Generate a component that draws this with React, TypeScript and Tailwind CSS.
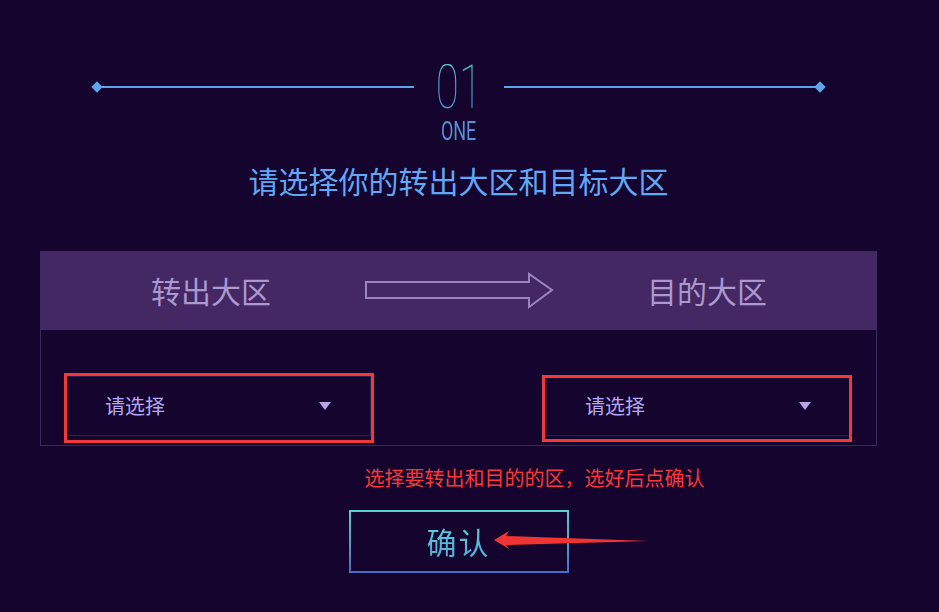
import React from 'react';

const cjk = { fontFamily: '"Microsoft YaHei", "Noto Sans CJK SC", "Noto Sans", sans-serif' };

function Divider() {
    return (
        <div className="flex h-[60px] w-full items-center px-[56px]">
            <div className="relative h-[2px] flex-1 bg-[#5da4ea]">
                <span className="absolute left-[-3px] top-[-3px] h-[8px] w-[8px] rotate-45 bg-[#5da4ea]" />
            </div>
            <div className="flex h-[60px] w-[90px] items-center justify-center">
                <span
                    className="block origin-center scale-x-[0.68] bg-gradient-to-b from-[#4fc3c9] to-[#4b8fdc] bg-clip-text text-[62px] font-thin leading-[46px] text-transparent"
                    style={{ fontFamily: 'Roboto, Inter, sans-serif' }}
                >
                    01
                </span>
            </div>
            <div className="relative h-[2px] flex-1 bg-[#5da4ea]">
                <span className="absolute right-[-3px] top-[-3px] h-[8px] w-[8px] rotate-45 bg-[#5da4ea]" />
            </div>
        </div>
    );
}

function Select() {
    return (
        <div className="flex h-[60px] w-[305px] items-center justify-between border border-[#2c1d4a] pl-[38px] pr-[39px]">
            <span className="text-[20px] text-[#b4a7f6]" style={cjk}>
                请选择
            </span>
            <svg width="12" height="8" viewBox="0 0 12 8">
                <polygon points="0,0 12,0 6,8" fill="#b8a4ea" />
            </svg>
        </div>
    );
}

export default function App() {
    return (
        <div className="h-[612px] w-[939px] overflow-hidden bg-[#14042e]">
            <div className="ml-[40px] flex w-[837px] flex-col items-center pt-[57px]">
                <Divider />
                <div
                    className="mt-[5px] origin-center scale-x-[0.72] text-[25px] leading-[20px] text-[#5a8fd6]"
                    style={{ fontFamily: 'Roboto, "Liberation Sans", sans-serif' }}
                >
                    ONE
                </div>
                <h1 className="mt-[23px] text-[30px] leading-none text-[#5ea8f6]" style={cjk}>
                    请选择你的转出大区和目标大区
                </h1>

                <div className="mt-[56px] w-full">
                    <div className="flex h-[79px] items-center bg-[#432863]">
                        <div className="flex w-[325px] justify-center pl-[17px]">
                            <span className="text-[30px] text-[#ab98cf]" style={cjk}>
                                转出大区
                            </span>
                        </div>
                        <svg width="190" height="38" viewBox="0 0 190 38" className="mt-[1px]">
                            <polygon
                                points="1,10 164,10 164,2 187,18 164,35 164,26 1,26"
                                fill="none"
                                stroke="#9a85c0"
                                strokeWidth="2"
                            />
                        </svg>
                        <div className="flex flex-1 justify-center pr-[18px]">
                            <span className="text-[30px] text-[#ab98cf]" style={cjk}>
                                目的大区
                            </span>
                        </div>
                    </div>
                    <div className="flex h-[116px] items-start justify-between border border-t-0 border-[#3a2a5c] px-[25px] pt-[46px]">
                        <div className="relative">
                            <Select />
                            <div className="absolute bottom-[-7px] left-[-2px] right-[-3px] top-[-3px] border-[3px] border-[#f03a3a]" />
                        </div>
                        <div className="relative">
                            <Select />
                            <div className="absolute bottom-[-6px] left-[-4px] right-[-1px] top-[-1px] border-[3px] border-[#f03a3a]" />
                        </div>
                    </div>
                </div>

                <p className="ml-[152px] mt-[22px] text-[20px] leading-none text-[#ff3535]" style={cjk}>
                    选择要转出和目的的区，选好后点确认
                </p>

                <div className="relative mt-[22px]">
                    <div className="bg-gradient-to-b from-[#5ccfd0] to-[#4a6cc0] p-[2px]">
                        <div className="flex h-[59px] w-[216px] items-center justify-center bg-[#14042e]">
                            <span
                                className="bg-gradient-to-b from-[#62d6dc] to-[#4aa6d6] bg-clip-text text-[30px] tracking-[2px] text-transparent"
                                style={cjk}
                            >
                                确认
                            </span>
                        </div>
                    </div>
                    <svg
                        width="160"
                        height="20"
                        viewBox="0 0 160 20"
                        className="absolute left-[145px] top-[21px]"
                    >
                        <polygon points="0,9 15,0 12,5 155,10 12,14 15,18" fill="#ef3434" />
                    </svg>
                </div>
            </div>
        </div>
    );
}
